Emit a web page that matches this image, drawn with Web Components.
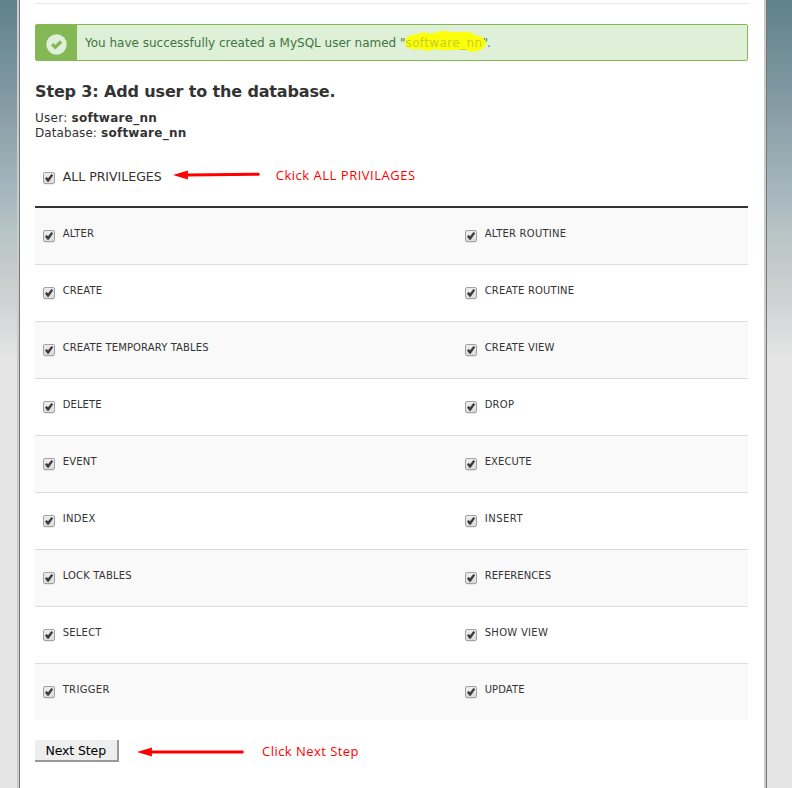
<!DOCTYPE html>
<html lang="en">
<head>
<meta charset="utf-8">
<title>MySQL Database Wizard</title>
<style>
html,body{margin:0;height:788px;overflow:hidden}
body{font-family:"DejaVu Sans",Verdana,sans-serif;color:#333}
</style>
</head>
<body>
<wizard-page></wizard-page>
<script>
const define = (name, html, init) => customElements.define(name, class extends HTMLElement {
  connectedCallback() {
    if (this.shadowRoot) return;
    this.attachShadow({ mode: "open" }).innerHTML = html;
    if (init) init.call(this, this.shadowRoot);
  }
});

// A single line of text, spaced so that it fills the width given in "w".
define("fit-text", `<style>
:host{display:inline-block;white-space:pre}
span{display:inline-block}
</style><span><slot></slot></span>`, function (root) {
  const w = +this.getAttribute("w");
  const span = root.querySelector("span");
  const n = this.textContent.length;
  this.style.width = w + "px";
  span.style.letterSpacing = (w - span.getBoundingClientRect().width) / n + "px";
});

define("check-box", `<style>
:host{display:block;width:12px;height:12px;flex:none}
svg{display:block;overflow:visible}
</style><svg width="12" height="13" viewBox="0 0 12 13">
<defs><linearGradient id="g" x2="0" y2="1"><stop stop-color="#eee"/><stop offset="1" stop-color="#dcdcdc"/></linearGradient></defs>
<rect x="1" y="11" width="10" height="1.7" rx="1" fill="#000" opacity=".1"/>
<rect x=".5" y=".5" width="11" height="11" rx="1.5" fill="url(#g)" stroke="#a2a2a2"/>
<path d="M2 6.4 3.6 4.9 5.1 6.3 8.4 2 10.2 3.2 5.7 9.7 4.4 9.7Z" fill="#3c3c3c"/>
</svg>`);

define("alert-box", `<style>
:host{display:flex;box-sizing:border-box;height:37px;border:1px solid #84b855;border-radius:2px;background:#dff0d8;color:#3c763d;font-size:12px}
.icon{width:41px;background:#84b855;display:flex;justify-content:center;align-items:center;padding:3px 1px 0 0;box-sizing:border-box;flex:none}
.text{padding:1px 0 0 8px;line-height:35px;display:flex;white-space:pre}
</style><div class="icon"><svg width="21" height="21" viewBox="0 0 21 21"><circle cx="10.5" cy="10.5" r="10.2" fill="#dff0d8"/><path d="M6.2 10.1 9.2 13.2 15.2 7.5" fill="none" stroke="#84b855" stroke-width="3.4"/></svg></div>
<div class="text"><slot></slot></div>`);

define("marked-name", `<style>
:host{display:block;position:relative;color:#c9cf24}
svg{position:absolute;left:-2px;top:5px}
.t{position:relative}
</style><svg width="84" height="23" viewBox="0 0 84 23"><path d="M1 12Q1 4 9 4L17 2Q22 0 27 3L33 1Q40-1 47 1L57 1Q66 0 71 4Q80 5 82 12Q81 18 74 20Q68 22 61 19L48 19Q36 20 30 18Q24 22 18 18Q1 20 1 12Z" fill="#fbff0a"/></svg><span class="t"><slot></slot></span>`);

define("red-arrow", `<style>
:host{display:block}svg{display:block}
</style><svg height="10" viewBox="0 0 110 10"><path fill="red"/></svg>`, function (root) {
  const w = +this.getAttribute("length"), tilt = +this.getAttribute("tilt") || 0;
  const s = root.querySelector("svg");
  s.setAttribute("width", w);
  s.setAttribute("viewBox", `0 0 ${w} 10`);
  root.querySelector("path").setAttribute("d",
    `M0 5 15 .5 14.8 3.5 ${w - 1} ${3.5 - tilt}Q${w + .5} ${5 - tilt} ${w - 1} ${6.5 - tilt}L14.8 6.5 15 9.5Z`);
});

define("privilege-item", `<style>
:host{display:flex;gap:7.7px;padding-left:8px}
check-box{margin-top:22px}
.label{font-size:10px;line-height:14px;padding-top:19px}
</style><check-box></check-box><div class="label"><slot></slot></div>`);

define("privilege-table", `<style>
:host{display:block;border-top:2px solid #333}
.row{display:grid;grid-template-columns:422px 1fr;height:56px;border-bottom:1px solid #ddd}
.row:nth-of-type(odd){background:#f9f9f9}
.row:last-child{border-bottom:0}
</style>`, function (root) {
  const data = [
    ["ALTER", 31.5, "ALTER ROUTINE", 81.5],
    ["CREATE", 39.5, "CREATE ROUTINE", 89.5],
    ["CREATE TEMPORARY TABLES", 146, "CREATE VIEW", 70],
    ["DELETE", 39, "DROP", 29.5],
    ["EVENT", 34, "EXECUTE", 47],
    ["INDEX", 33, "INSERT", 38.5],
    ["LOCK TABLES", 69, "REFERENCES", 66.5],
    ["SELECT", 39, "SHOW VIEW", 63.5],
    ["TRIGGER", 47, "UPDATE", 40]
  ];
  for (const [a, aw, b, bw] of data) {
    const row = document.createElement("div");
    row.className = "row";
    row.innerHTML = `<privilege-item><fit-text w="${aw}">${a}</fit-text></privilege-item><privilege-item><fit-text w="${bw}">${b}</fit-text></privilege-item>`;
    root.append(row);
  }
});

define("next-button", `<style>
:host{display:block}
button{display:block;box-sizing:border-box;width:84px;height:22px;padding:1px 0 0 10.5px;margin:0;border:solid #999;border-width:0 2px 2px 0;background:#eee;font:12.5px/19px "DejaVu Sans",Verdana,sans-serif;color:#000;text-align:left}
</style><button type="button"><slot></slot></button>`);

define("wizard-page", `<style>
:host{display:flex;justify-content:flex-start;height:788px;padding-left:17px;box-sizing:border-box;background:linear-gradient(#5f828b 0,#7e969f 85px,#a9b9c0 200px,#b9c5c6 235px,#cfd2d3 300px,#e5e5e5 358px)}
.sheet{display:flex;flex-direction:column;box-sizing:border-box;width:745px;height:788px;background:#fff;padding:3px 16px 0 15px;border-left:1px solid #777;margin-left:2px;box-shadow:-2px 0 #ccc}
.edge{width:2px;background:#ccc;border-right:1px solid #777}
.rule{height:1px;background:#e8e8e8;margin-bottom:20px;flex:none}
h1{margin:21px 0 0;font-size:16px;line-height:20px}
.info{font-size:12px;line-height:15px;margin-top:9px}
.info div{display:flex;gap:4px;height:15px}
.all{display:flex;height:65px;flex:none}
.all check-box{margin:31px 7.7px 0 8px}
.all .name{font-size:12.5px;line-height:16px;padding-top:28px}
.all red-arrow{margin:29px 16px 0 11px}
.note{font-family:"Open Sans","Noto Sans",sans-serif;font-size:13px;line-height:18px;color:red}
.all .note{padding-top:25px}
.foot{display:flex;margin-top:20px}
.foot red-arrow{margin:7px 18px 0}
.foot .note{padding-top:2px}
</style>
<main class="sheet">
<div class="rule"></div>
<alert-box><fit-text w="320.5">You have successfully created a MySQL user named "</fit-text><marked-name><fit-text w="77">software_nn</fit-text></marked-name><fit-text w="7.5">".</fit-text></alert-box>
<h1><fit-text w="300.5">Step 3: Add user to the database.</fit-text></h1>
<div class="info"><div><fit-text w="32.5">User:</fit-text><b><fit-text w="85.5">software_nn</fit-text></b></div>
<div><fit-text w="62">Database:</fit-text><b><fit-text w="85.5">software_nn</fit-text></b></div></div>
<div class="all"><check-box></check-box><div class="name"><fit-text w="99">ALL PRIVILEGES</fit-text></div><red-arrow length="87" tilt=".8"></red-arrow><div class="note"><fit-text w="140">Ckick ALL PRIVILAGES</fit-text></div></div>
<privilege-table></privilege-table>
<div class="foot"><next-button><fit-text w="60.5">Next Step</fit-text></next-button><red-arrow length="107"></red-arrow><div class="note"><fit-text w="97">Click Next Step</fit-text></div></div>
</main><div class="edge"></div>`);
</script>
</body>
</html>
